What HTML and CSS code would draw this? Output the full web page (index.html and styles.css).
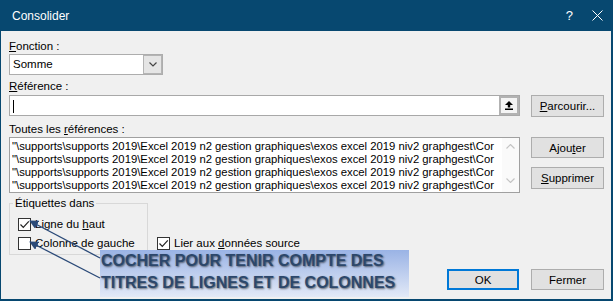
FILE: index.html
```html
<!DOCTYPE html>
<html lang="fr">
<head>
<meta charset="utf-8">
<title>Consolider</title>
<link rel="stylesheet" href="styles.css">
</head>
<body>
<div class="window">
  <div class="titlebar">
    <span class="title">Consolider</span>
    <span class="tb-help">?</span>
    <span class="tb-close"><svg width="11" height="11" viewBox="0 0 11 11"><path d="M0.5 0.5 L10.5 10.5 M10.5 0.5 L0.5 10.5" stroke="#fff" stroke-width="1" fill="none"/></svg></span>
  </div>
  <div class="content">
    <div class="label lbl-fonction"><u>F</u>onction :</div>
    <div class="select">
      <span class="select-value">Somme</span>
      <span class="select-btn"><svg width="8" height="5" viewBox="0 0 8 5"><path d="M0.5 0.5 L4 4 L7.5 0.5" stroke="#444" stroke-width="1.2" fill="none"/></svg></span>
    </div>
    <div class="label lbl-ref"><u>R</u>éférence :</div>
    <div class="row row-ref">
      <div class="ref-input">
        <span class="ref-field"><span class="caret"></span></span>
        <span class="collapse-btn"><svg width="8" height="9" viewBox="0 0 8 9"><path d="M4 0 L8 4 L5.2 4 L5.2 6.5 L2.8 6.5 L2.8 4 L0 4 Z" fill="#000"/><rect x="0" y="7.5" width="8" height="1.5" fill="#000"/></svg></span>
      </div>
      <button class="btn btn-browse"><u>P</u>arcourir...</button>
    </div>
    <div class="label lbl-all">Toutes les <u>r</u>éférences :</div>
    <div class="row row-list">
      <div class="listbox">
        <div class="list-items">
          <div class="item">"\supports\supports 2019\Excel 2019 n2 gestion graphiques\exos excel 2019 niv2 graphgest\Cor</div>
          <div class="item">"\supports\supports 2019\Excel 2019 n2 gestion graphiques\exos excel 2019 niv2 graphgest\Cor</div>
          <div class="item">"\supports\supports 2019\Excel 2019 n2 gestion graphiques\exos excel 2019 niv2 graphgest\Cor</div>
          <div class="item">"\supports\supports 2019\Excel 2019 n2 gestion graphiques\exos excel 2019 niv2 graphgest\Cor</div>
        </div>
        <div class="scrollbar">
          <svg width="9" height="5" viewBox="0 0 9 5"><path d="M0.5 4.5 L4.5 0.5 L8.5 4.5" stroke="#c4c4c4" stroke-width="1.2" fill="none"/></svg>
          <svg width="9" height="5" viewBox="0 0 9 5"><path d="M0.5 0.5 L4.5 4.5 L8.5 0.5" stroke="#c4c4c4" stroke-width="1.2" fill="none"/></svg>
        </div>
      </div>
      <div class="btn-col">
        <button class="btn btn-add">Ajou<u>t</u>er</button>
        <button class="btn"><u>S</u>upprimer</button>
      </div>
    </div>
    <div class="row row-bottom">
      <fieldset class="group">
        <legend>Étiquettes dans</legend>
        <div class="check check-first"><span class="box"><svg width="11" height="11" viewBox="0 0 11 11"><path d="M1.5 5.5 L4.3 8.3 L9.8 2.3" stroke="#222" stroke-width="1.2" fill="none"/></svg></span><span class="check-text">Ligne du <u>h</u>aut</span></div>
        <div class="check check-second"><span class="box"></span><span class="check-text">Colonne de gauche</span></div>
      </fieldset>
      <div class="check check-lier"><span class="box"><svg width="11" height="11" viewBox="0 0 11 11"><path d="M1.5 5.5 L4.3 8.3 L9.8 2.3" stroke="#222" stroke-width="1.2" fill="none"/></svg></span><span class="check-text">Lier aux <u>d</u>onnées source</span></div>
      <div class="dlg-btns">
        <button class="btn btn-ok">OK</button>
        <button class="btn btn-close">Fermer</button>
      </div>
    </div>
  </div>
  <div class="callout">COCHER POUR TENIR COMPTE DES<br>TITRES DE LIGNES ET DE COLONNES</div>
  <svg class="arrows" width="613" height="301" viewBox="0 0 613 301">
    <defs>
      <marker id="ah" viewBox="0 0 10 10" refX="9" refY="5" markerWidth="9" markerHeight="9" markerUnits="userSpaceOnUse" orient="auto">
        <path d="M0 0 L10 5 L0 10 Z" fill="#2b4a78"/>
      </marker>
    </defs>
    <line x1="100" y1="258" x2="30" y2="221" stroke="#2b4a78" stroke-width="1.3" marker-end="url(#ah)"/>
    <line x1="100" y1="278" x2="30" y2="242" stroke="#2b4a78" stroke-width="1.3" marker-end="url(#ah)"/>
  </svg>
</div>
</body>
</html>
```

FILE: styles.css
```css
* { box-sizing: border-box; }
html, body { margin: 0; padding: 0; }
body {
  width: 613px;
  height: 301px;
  overflow: hidden;
  background: #f0f0f0;
  font-family: "Liberation Sans", Arial, sans-serif;
  font-size: 11.5px;
  color: #000;
}
.window {
  position: relative;
  width: 613px;
  height: 301px;
  display: flex;
  flex-direction: column;
  background: #074870;
}
.titlebar {
  height: 31px;
  flex: none;
  display: flex;
  align-items: center;
  color: #fff;
  padding: 0 10px 0 12px;
}
.title { font-size: 12px; }
.tb-help { margin-left: auto; margin-right: 19px; font-size: 13px; }
.tb-close svg { display: block; }

.content {
  flex: 1;
  margin: 0 2px 2px 1px;
  background: #f0f0f0;
  padding: 0 7px 0 8px;
  display: flex;
  flex-direction: column;
}
.label { height: 14px; line-height: 14px; white-space: nowrap; }
.lbl-fonction { margin-top: 8px; }
.lbl-ref { margin-top: 4px; }
.lbl-all { margin-top: 5px; }

.select {
  margin-top: 1px;
  width: 154px;
  height: 21px;
  border: 1px solid #adadad;
  background: #fff;
  display: flex;
}
.select-value { flex: 1; padding-left: 3px; line-height: 19px; }
.select-btn {
  width: 19px;
  background: #e5e5e5;
  box-shadow: inset 0 0 0 1px #b4b4b4;
  display: flex;
  align-items: center;
  justify-content: center;
}
.select-btn svg, .collapse-btn svg, .box svg, .scrollbar svg { display: block; }

.row { display: flex; }
.row-ref { margin-top: 2px; height: 22px; align-items: flex-start; }
.ref-input {
  width: 511px;
  height: 21px;
  border: 1px solid #a8a8a8;
  background: #fff;
  display: flex;
}
.ref-field { flex: 1; }
.caret { display: block; width: 1px; height: 13px; margin: 4px 0 0 3px; background: #000; }
.collapse-btn {
  width: 20px;
  background: #f4f4f4;
  box-shadow: inset 0 0 0 2px #b2b2b2;
  display: flex;
  align-items: center;
  justify-content: center;
}

.btn {
  width: 73px;
  height: 22px;
  background: #e1e1e1;
  border: 1px solid #adadad;
  font: inherit;
  color: #000;
  padding: 0;
  margin: 0;
}
.btn-browse { margin-left: auto; }
.btn-add { height: 21px; }

.row-list { margin-top: 1px; height: 56px; }
.listbox {
  width: 511px;
  height: 56px;
  border: 1px solid #a0a0a0;
  background: #fff;
  display: flex;
}
.list-items { flex: 1; min-width: 0; overflow: hidden; padding: 2px 0 0 2px; font-size: 11.3px; }
.item { white-space: nowrap; line-height: 13px; height: 13px; overflow: hidden; }
.scrollbar {
  width: 17px;
  flex: none;
  background: #fafafa;
  display: flex;
  flex-direction: column;
  justify-content: space-between;
  align-items: center;
  padding: 6px 0 9px;
}
.btn-col { margin-left: auto; display: flex; flex-direction: column; gap: 9px; }

.row-bottom { margin-top: 3px; align-items: flex-start; }
.group {
  margin: 0;
  width: 139px;
  padding: 0 0 4px 3px;
  border: 1px solid #d8d8d8;
}
.group legend { padding: 0 2px; line-height: 14px; }
.check { display: flex; align-items: center; height: 13px; line-height: 13px; white-space: nowrap; }
.check-text { white-space: pre; }
.group .check { margin-left: 5px; }
.check-first { margin-top: 8px; }
.check-second { margin-top: 6px; }
.box {
  width: 13px;
  height: 13px;
  flex: none;
  border: 1px solid #333;
  background: #fff;
  margin-right: 4px;
  display: flex;
  align-items: center;
  justify-content: center;
}
.check-lier { margin-top: 41px; margin-left: 9px; }
.dlg-btns { margin-left: auto; margin-top: 73px; display: flex; gap: 12px; }
.btn-ok { width: 72px; height: 21px; border: 2px solid #0078d7; }
.btn-close { height: 21px; }

.callout {
  position: absolute;
  left: 100px;
  top: 250px;
  width: 309px;
  height: 47px;
  padding-left: 1px;
  background: linear-gradient(to bottom, #9ab3e5, #e2e9f7);
  font-family: "Liberation Sans", Arial, sans-serif;
  font-weight: bold;
  font-size: 16px;
  line-height: 22px;
  color: #2c476b;
  text-shadow: 1px 1px 2px rgba(0, 0, 0, 0.55);
  white-space: nowrap;
}
.arrows { position: absolute; left: 0; top: 0; pointer-events: none; }
```
